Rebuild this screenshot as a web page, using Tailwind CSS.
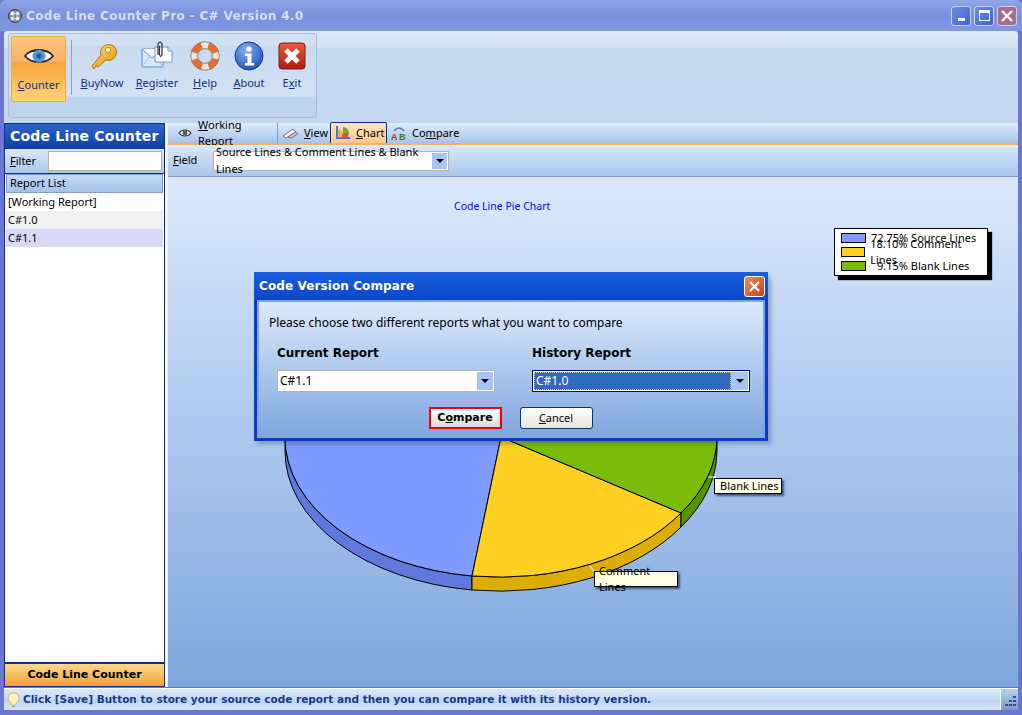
<!DOCTYPE html>
<html lang="en">
<head>
    <meta charset="UTF-8">
    <title>Code Line Counter Pro - C# Version 4.0</title>
    <script src="https://cdn.jsdelivr.net/npm/@tailwindcss/browser@4"></script>
</head>
<body class="overflow-hidden">
<div class="relative w-[1022px] h-[715px] flex flex-col overflow-hidden bg-[#6a76d2] font-['Noto_Sans',sans-serif] text-[11px] text-black">

    <!-- Title bar -->
    <header class="h-[31px] shrink-0 flex items-center pl-[7px] pr-[5px] rounded-t-[6px] bg-gradient-to-b from-[#8fa6e8] via-[#7a90dc] to-[#7f99e2]">
        <svg width="16" height="16" viewBox="0 0 16 16" class="shrink-0">
            <circle cx="8" cy="8" r="6.5" fill="#8a8f99" stroke="#33363d"/>
            <circle cx="5.5" cy="5.5" r="2" fill="#f2f2f2"/><circle cx="10.5" cy="5.5" r="2" fill="#e0e0e0"/>
            <circle cx="5.5" cy="10.5" r="2" fill="#d8d8d8"/><circle cx="10.5" cy="10.5" r="2" fill="#f2f2f2"/>
        </svg>
        <span class="ml-[3px] font-['DejaVu_Sans',sans-serif] font-bold text-[12px] tracking-[0.35px] text-[#d5def5]">Code Line Counter Pro - C# Version 4.0</span>
        <div class="ml-auto flex gap-[3px]">
            <div class="w-[20px] h-[20px] rounded-[3px] border border-[#c5d1f2] bg-gradient-to-br from-[#6f8ce6] to-[#3c60d8] flex items-end justify-center pb-[4px]"><div class="w-[7px] h-[3px] bg-white"></div></div>
            <div class="w-[20px] h-[20px] rounded-[3px] border border-[#c5d1f2] bg-gradient-to-br from-[#6f8ce6] to-[#3c60d8] flex items-center justify-center"><div class="w-[11px] h-[11px] border border-white border-t-[3px]"></div></div>
            <div class="w-[20px] h-[20px] rounded-[3px] border border-[#c5d1f2] bg-[#a96d87] flex items-center justify-center">
                <svg width="12" height="12" viewBox="0 0 12 12"><path d="M1 1l10 10M11 1L1 11" stroke="#fff" stroke-width="2.4"/></svg>
            </div>
        </div>
    </header>

    <!-- Ribbon -->
    <section class="h-[92px] shrink-0 mx-[4px] pl-[4px] pt-[2px] rounded-t-[3px] bg-[linear-gradient(#dfe8f5_0%,#d6e2f2_18%,#c6d8ee_19%,#c4d7ef_100%)]">
        <div class="w-[309px] h-[85px] rounded-[3px] border border-[#a6bfdf] bg-[linear-gradient(#d5e2f3_0%,#d1dff2_14%,#c9daf0_15%,#d3e1f3_75%,#bed3ec_76%,#bed3ec_100%)] flex pl-[2px] pt-[2px]">
            <!-- Counter -->
            <div class="w-[55px] h-[66px] rounded-[2px] border border-[#e8a84a] bg-[linear-gradient(#fbc27d_0%,#f9b568_38%,#fba33a_39%,#ffd47a_100%)] flex flex-col items-center pt-[9px]">
                <svg width="30" height="20" viewBox="0 0 30 20">
                    <path d="M1 10C7 2 23 2 29 10C23 18 7 18 1 10Z" fill="#fff" stroke="#222" stroke-width="1.6"/>
                    <path d="M1 9C8 1 22 1 29 9C22 4 8 4 1 9Z" fill="#222"/>
                    <circle cx="15" cy="10" r="6.5" fill="#4e97d6"/><circle cx="15" cy="10" r="2.5" fill="#235a95"/>
                </svg>
                <span class="mt-[13px] text-[#12307c] leading-none"><u>C</u>ounter</span>
            </div>
            <div class="w-px h-[55px] mt-[4px] ml-[5px] bg-[#8ea3bd]"></div>

            <div class="w-[60px] flex flex-col items-center pt-[4px] text-[#12307c]">
                <svg width="32" height="32" viewBox="0 0 32 32">
                    <defs><linearGradient id="k" x1="0" y1="0" x2="1" y2="1"><stop offset="0" stop-color="#ffe27a"/><stop offset="1" stop-color="#d98a12"/></linearGradient></defs>
                    <path d="M8 29L6 26L15 15A8 8 0 1 1 20 20L12 27L10 26Z" fill="url(#k)" stroke="#b5760f"/>
                    <circle cx="22" cy="10" r="2.6" fill="#fff4c9" stroke="#c58a1f"/>
                </svg>
                <span class="mt-[5px] leading-none"><u>B</u>uyNow</span>
            </div>
            <div class="w-[50px] flex flex-col items-center pt-[4px] text-[#12307c]">
                <svg width="32" height="32" viewBox="0 0 32 32">
                    <path d="M1 9H22V27H1Z" fill="#d9e8f9" stroke="#5d8fc8"/><path d="M1 9L11 18L22 9" fill="#f4f9ff" stroke="#5d8fc8"/><path d="M1 27L9 16M22 27L14 16" fill="none" stroke="#9fc0e4"/>
                    <path d="M14 7H27L31 11V22H14Z" fill="#fff" stroke="#6b9ad0"/><path d="M27 7V11H31" fill="#dbe8f7" stroke="#6b9ad0"/>
                    <path d="M17 15V4Q19 0 21 4V15Q19 18 18.5 14V6" fill="none" stroke="#333" stroke-width="1.2"/>
                </svg>
                <span class="mt-[5px] leading-none"><u>R</u>egister</span>
            </div>
            <div class="w-[46px] flex flex-col items-center pt-[4px] text-[#12307c]">
                <svg width="30" height="32" viewBox="0 0 30 32">
                    <circle cx="15" cy="16" r="11" fill="none" stroke="#e8e6e0" stroke-width="7"/>
                    <circle cx="15" cy="16" r="11" fill="none" stroke="#ed6a2e" stroke-width="7" stroke-dasharray="10.5 6.8" stroke-dashoffset="-3"/>
                    <circle cx="15" cy="16" r="14.3" fill="none" stroke="#7d7d78" stroke-width="0.9"/><circle cx="15" cy="16" r="7.3" fill="none" stroke="#7d7d78" stroke-width="0.9"/>
                </svg>
                <span class="mt-[5px] leading-none"><u>H</u>elp</span>
            </div>
            <div class="w-[42px] flex flex-col items-center pt-[4px] text-[#12307c]">
                <svg width="30" height="32" viewBox="0 0 30 32">
                    <defs><radialGradient id="inf" cx="0.4" cy="0.3" r="0.8"><stop offset="0" stop-color="#86b4f2"/><stop offset="1" stop-color="#1c46ad"/></radialGradient></defs>
                    <circle cx="15" cy="16" r="14" fill="url(#inf)" stroke="#1a3a8c"/>
                    <circle cx="15" cy="9" r="2.6" fill="#fff"/><path d="M11 13.5H17.5V23H20V25.5H11V23H13.5V16H11Z" fill="#fff"/>
                </svg>
                <span class="mt-[5px] leading-none"><u>A</u>bout</span>
            </div>
            <div class="w-[44px] flex flex-col items-center pt-[4px] text-[#12307c]">
                <svg width="28" height="32" viewBox="0 0 28 32">
                    <defs><linearGradient id="ex" x1="0" y1="0" x2="0" y2="1"><stop offset="0" stop-color="#ee5a3a"/><stop offset="1" stop-color="#b01d12"/></linearGradient></defs>
                    <rect x="1" y="3" width="26" height="26" rx="3" fill="url(#ex)" stroke="#7d1e18"/>
                    <path d="M8 10L20 22M20 10L8 22" stroke="#fff" stroke-width="5"/>
                </svg>
                <span class="mt-[5px] leading-none">E<u>x</u>it</span>
            </div>
        </div>
    </section>

    <!-- Main -->
    <div class="flex-1 min-h-0 mx-[4px] flex bg-[#f2f5fb]">
        <!-- Sidebar -->
        <aside class="w-[161px] shrink-0 flex flex-col border border-[#0a2e96] mr-[3px]">
            <div class="h-[25px] shrink-0 pl-[5px] flex items-center bg-gradient-to-b from-[#2f66c6] to-[#0f3f9f] text-white font-['DejaVu_Sans',sans-serif] font-bold text-[14px] tracking-[0.2px]">Code Line Counter</div>
            <div class="h-[25px] shrink-0 flex items-center pl-[5px] pr-[2px] bg-gradient-to-b from-[#dbe8f9] to-[#a9c6ea] border-b border-[#0a2e96]"><span><u>F</u>ilter</span>
                <div class="ml-auto w-[114px] h-[20px] bg-white border border-[#b5b4a8]"></div>
            </div>
            <div class="flex-1 min-h-0 bg-white flex flex-col pl-px pr-px">
                <div class="h-[19px] shrink-0 pl-[3px] flex items-center bg-gradient-to-b from-[#c6daf4] to-[#a5c3ea] border border-[#7f9fd0]">Report List</div>
                <div class="h-[18px] pl-[2px] flex items-center bg-white">[Working Report]</div>
                <div class="h-[18px] pl-[2px] flex items-center bg-[#f1f1f1]">C#1.0</div>
                <div class="h-[18px] pl-[2px] flex items-center bg-[#d8d8f9]">C#1.1</div>
            </div>
            <div class="h-[24px] shrink-0 flex items-center justify-center border-t-[2px] border-[#0a2e96] bg-gradient-to-b from-[#fbd98b] to-[#f2a12c] font-bold font-['DejaVu_Sans',sans-serif] text-[11px]">Code Line Counter</div>
        </aside>

        <!-- Content -->
        <main class="flex-1 min-w-0 flex flex-col">
            <div class="h-[22px] shrink-0 flex items-end gap-0 bg-gradient-to-b from-[#dfeafa] to-[#a6c4ea] border-b-[2px] border-[#f6b45a]">
                <div class="h-[20px] w-[110px] flex items-center pl-[10px] gap-[6px] border-r border-[#7f9fd0]">
                    <svg width="14" height="10" viewBox="0 0 14 10" class="shrink-0"><path d="M1 5C4 1 10 1 13 5C10 9 4 9 1 5Z" fill="#fff" stroke="#333" stroke-width="1.1"/><circle cx="7" cy="5" r="2.4" fill="#555"/></svg>
                    <span><u>W</u>orking Report</span>
                </div>
                <div class="h-[20px] w-[52px] flex items-center pl-[4px] gap-[5px]">
                    <svg width="17" height="12" viewBox="0 0 17 12" class="shrink-0"><path d="M1 9L11 2L14 5L4 11Z" fill="#eee" stroke="#777"/><path d="M6 10L14 5L16 7L9 11Z" fill="#ccc" stroke="#777"/></svg>
                    <span><u>V</u>iew</span>
                </div>
                <div class="h-[21px] w-[57px] flex items-center pl-[4px] gap-[5px] rounded-t-[2px] border border-b-0 border-[#0a2e96] bg-gradient-to-b from-[#fbe6c4] to-[#fbc687]">
                    <svg width="16" height="16" viewBox="0 0 16 16" class="shrink-0"><path d="M2 1V13H15" fill="none" stroke="#3b7bd0" stroke-width="2"/><path d="M8 8V2A6 6 0 0 1 14 8Z" fill="#6ca93a"/><path d="M8 8H14A6 6 0 0 1 6 13Z" fill="#d9552b"/><path d="M8 8L6 13A6 6 0 0 1 4 4Z" fill="#efb234"/></svg>
                    <span><u>C</u>hart</span>
                </div>
                <div class="h-[20px] flex items-center pl-[4px] gap-[5px]">
                    <svg width="16" height="16" viewBox="0 0 16 16" class="shrink-0"><path d="M3 6Q8 0 13 6" fill="none" stroke="#4d84c9" stroke-width="1.6"/><text x="0" y="15" font-size="9" font-weight="700" fill="#b3322a" font-family="Liberation Sans">A</text><text x="8" y="15" font-size="9" font-weight="700" fill="#3c7a3a" font-family="Liberation Sans">B</text></svg>
                    <span>Co<u>m</u>pare</span>
                </div>
            </div>
            <div class="h-[32px] shrink-0 flex items-center pl-[5px] bg-gradient-to-b from-[#dbe8f9] to-[#a9c6ea] border-b border-[#7a9ad0]">
                <span class="w-[40px]"><u>F</u>ield</span>
                <div class="w-[236px] h-[20px] flex items-center justify-between pl-[2px] pr-px bg-white border border-[#b5b4a8]">
                    <span>Source Lines &amp; Comment Lines &amp; Blank Lines</span>
                    <div class="w-[16px] h-[16px] bg-[#a9c4f3] flex items-center justify-center"><div class="border-x-[4px] border-x-transparent border-t-[4px] border-t-black"></div></div>
                </div>
            </div>

            <!-- Chart canvas: origin x=168 y=180 in window -->
            <div class="relative flex-1 min-h-0 bg-gradient-to-b from-[#dbe9fc] to-[#80a7dd]">
                <div class="absolute left-[286px] top-[22px] text-[10.5px] text-[#0a0ae0]">Code Line Pie Chart</div>

                <svg class="absolute left-0 top-0" width="850" height="508" viewBox="168 180 850 508">
                    <path d="M285 440A216 140 0 0 0 472 579V593A216 140 0 0 1 285 454Z" fill="#5e78dc" stroke="#000"/>
                    <path d="M472 579A216 140 0 0 0 681 516V530A216 140 0 0 1 472 593Z" fill="#dcae00" stroke="#000"/>
                    <path d="M681 516A216 140 0 0 0 717 440V454A216 140 0 0 1 681 530Z" fill="#559300" stroke="#000"/>
                    <path d="M501 440L472 579A216 140 0 0 1 285 440A216 140 0 0 1 501 300Z" fill="#7f9bff" stroke="#000"/>
                    <path d="M501 440L681 516A216 140 0 0 1 472 579Z" fill="#fdd023" stroke="#000"/>
                    <path d="M501 440L717 440A216 140 0 0 1 681 516Z" fill="#7abb0c" stroke="#000"/>
                    <path d="M708 480H716" stroke="#fff"/><path d="M590 569L594 574" stroke="#fff"/>
                </svg>

                <div class="absolute left-[546px] top-[301px] w-[68px] h-[16px] flex items-center pl-[5px] bg-[#ffffe6] border border-black shadow-[2px_2px_2px_rgba(30,50,90,.75)]">Blank Lines</div>
                <div class="absolute left-[426px] top-[394px] w-[84px] h-[16px] flex items-center pl-[4px] bg-[#ffffe6] border border-black shadow-[2px_2px_2px_rgba(30,50,90,.75)]">Comment Lines</div>

                <!-- Legend -->
                <div class="absolute left-[666px] top-[51px] w-[154px] h-[48px] flex flex-col justify-center pl-[6px] bg-white border border-black shadow-[4px_4px_1px_#000]">
                    <div class="flex items-center h-[14px]"><div class="w-[25px] h-[10px] bg-[#7f9bff] border border-black"></div><span class="ml-[5px]">72.75% Source Lines</span></div>
                    <div class="flex items-center h-[14px]"><div class="w-[25px] h-[10px] bg-[#fdd023] border border-black"></div><span class="ml-[5px]">18.10% Comment Lines</span></div>
                    <div class="flex items-center h-[14px]"><div class="w-[25px] h-[10px] bg-[#7abb0c] border border-black"></div><span class="ml-[11px]">9.15% Blank Lines</span></div>
                </div>
            </div>
        </main>
    </div>

    <!-- Status bar -->
    <footer class="h-[22px] shrink-0 mx-[4px] mt-px flex items-stretch bg-[linear-gradient(#dbe8fa,#c5d9f4_50%,#bcd3f1_51%,#d8e6f9)] border-t border-white">
        <div class="flex-1 flex items-center pl-[3px] border-r border-white">
            <svg width="13" height="16" viewBox="0 0 13 16" class="shrink-0"><path d="M6.5 1A5 5 0 0 1 9 10.5V13H4V10.5A5 5 0 0 1 6.5 1Z" fill="#fdf3b8" stroke="#c9b96a"/><path d="M5 14.5H8" stroke="#999"/></svg>
            <span class="ml-[3px] font-['DejaVu_Sans',sans-serif] font-bold text-[10.5px] text-[#17398c]">Click [Save] Button to store your source code report and then you can compare it with its history version.</span>
        </div>
        <div class="w-[17px] bg-[linear-gradient(#b6cdee,#7f9cc6)] relative">
            <svg class="absolute right-px bottom-[2px]" width="12" height="12" viewBox="0 0 12 12" fill="#31507f"><rect x="8" y="0" width="3" height="2"/><rect x="8" y="4" width="3" height="2"/><rect x="4" y="4" width="3" height="2"/><rect x="8" y="8" width="3" height="2"/><rect x="4" y="8" width="3" height="2"/><rect x="0" y="8" width="3" height="2"/></svg>
        </div>
    </footer>
    <div class="h-[5px] shrink-0"></div>

    <!-- Dialog over the chart -->
    <div class="absolute left-[254px] top-[272px] w-[514px] h-[169px] flex flex-col rounded-t-[6px] bg-[#0c3bc2] shadow-[3px_3px_4px_rgba(40,60,110,.35)]">
        <div class="h-[28px] shrink-0 flex items-center pl-[5px] pr-[3px] bg-gradient-to-b from-[#1b5ee0] to-[#0c47c8]">
            <span class="font-['DejaVu_Sans',sans-serif] font-bold text-[12px] text-white tracking-[0.1px]">Code Version Compare</span>
            <div class="ml-auto w-[21px] h-[21px] rounded-[3px] border border-white bg-gradient-to-br from-[#eb8a60] to-[#c8401c] flex items-center justify-center">
                <svg width="13" height="13" viewBox="0 0 13 13"><path d="M2 2L11 11M11 2L2 11" stroke="#fff" stroke-width="2.2"/></svg>
            </div>
        </div>
        <div class="flex-1 mx-[3px] mb-[3px] flex flex-col px-[10px] pt-[13px] border-2 border-[#7da3e6] bg-gradient-to-b from-[#dde9fb] to-[#80a7de] text-[12px]">
            <div class="leading-[16px]">Please choose two different reports what you want to compare</div>
            <div class="flex mt-[14px] pl-[8px] gap-[37px]">
                <div class="w-[218px]">
                    <div class="font-['DejaVu_Sans',sans-serif] font-bold text-[12px] leading-[16px]">Current Report</div>
                    <div class="mt-[9px] h-[22px] flex items-center justify-between pl-[2px] pr-px bg-white border border-[#b5b4a8]">
                        <span>C#1.1</span>
                        <div class="w-[16px] h-[18px] bg-[#a9c4f3] flex items-center justify-center"><div class="border-x-[4px] border-x-transparent border-t-[4px] border-t-black"></div></div>
                    </div>
                </div>
                <div class="w-[218px]">
                    <div class="font-['DejaVu_Sans',sans-serif] font-bold text-[12px] leading-[16px]">History Report</div>
                    <div class="mt-[9px] h-[22px] flex items-center justify-between p-px bg-white border border-[#000a80]">
                        <span class="flex-1 h-full pl-px flex items-center text-white bg-[#3168c4] border border-dotted border-[#f1c040]">C#1.0</span>
                        <div class="w-[17px] h-full bg-[#a9c4f3] flex items-center justify-center"><div class="border-x-[4px] border-x-transparent border-t-[4px] border-t-black"></div></div>
                    </div>
                </div>
            </div>
            <div class="flex justify-center mt-[15px] gap-[18px] pr-[1px]">
                <div class="w-[73px] h-[22px] flex items-center justify-center border-2 border-[#f00010] bg-gradient-to-b from-white to-[#dcdcd2] font-['DejaVu_Sans',sans-serif] font-bold text-[11px]">C<u>o</u>mpare</div>
                <div class="w-[73px] h-[22px] flex items-center justify-center rounded-[3px] border border-[#003c74] bg-gradient-to-b from-white to-[#e6e4da] text-[11px]"><u>C</u>ancel</div>
            </div>
        </div>
    </div>
</div>
</body>
</html>
